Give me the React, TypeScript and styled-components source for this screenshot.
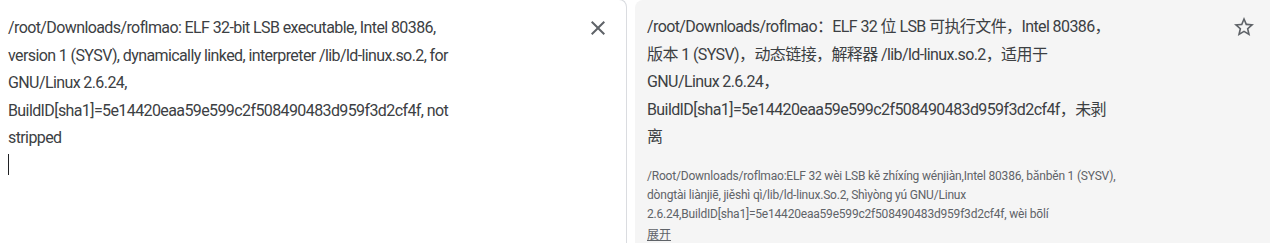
import React from 'react'
import styled, {createGlobalStyle} from 'styled-components'

const GlobalStyle = createGlobalStyle`
  html, body {
    margin: 0;
    padding: 0;
    background: #fff;
    overflow: hidden;
  }
  body {
    font-family: Roboto, "Noto Sans CJK SC", "Liberation Sans", sans-serif;
  }
`

const source = '/root/Downloads/roflmao: ELF 32-bit LSB executable, Intel 80386, version 1 (SYSV), dynamically linked, interpreter /lib/ld-linux.so.2, for GNU/Linux 2.6.24, BuildID[sha1]=5e14420eaa59e599c2f508490483d959f3d2cf4f, not stripped'

const target = '/root/Downloads/roflmao：ELF 32 位 LSB 可执行文件，Intel 80386，版本 1 (SYSV)，动态链接，解释器 /lib/ld-linux.so.2，适用于 GNU/Linux 2.6.24，BuildID[sha1]=5e14420eaa59e599c2f508490483d959f3d2cf4f，未剥离'

const pinyin = '/Root/Downloads/roflmao:ELF 32 wèi LSB kě zhíxíng wénjiàn,Intel 80386, bǎnběn 1 (SYSV), dòngtài liànjiē, jiěshì qì/lib/ld-linux.So.2, Shìyòng yú GNU/Linux 2.6.24,BuildID[sha1]=5e14420eaa59e599c2f508490483d959f3d2cf4f, wèi bōlí'

const CloseIcon = () => (
  <svg width="24" height="24" viewBox="0 0 24 24" fill="#5f6368">
    <path d="M19 6.41 17.59 5 12 10.59 6.41 5 5 6.41 10.59 12 5 17.59 6.41 19 12 13.41 17.59 19 19 17.59 13.41 12z" />
  </svg>
)

const StarIcon = () => (
  <svg width="24" height="24" viewBox="0 0 24 24" fill="#5f6368">
    <path d="M22 9.24l-7.19-.62L12 2 9.19 8.63 2 9.24l5.46 4.73L5.82 21 12 17.27 18.18 21l-1.63-7.03L22 9.24zM12 15.4l-3.76 2.27 1-4.28-3.32-2.88 4.38-.38L12 6.1l1.71 4.04 4.38.38-3.32 2.88 1 4.28L12 15.4z" />
  </svg>
)

export default function App() {
  return (
    <>
      <GlobalStyle />
      <Page>
        <SourcePanel>
          <Editor>
            <MainText $width={462}>{source}</MainText>
            <Caret />
          </Editor>
          <IconButton aria-label="Clear source text">
            <CloseIcon />
          </IconButton>
        </SourcePanel>
        <TargetPanel>
          <Result>
            <MainText $width={468} lang="zh-CN">{target}</MainText>
            <Romanization>{pinyin}</Romanization>
            <Expand>展开</Expand>
          </Result>
          <IconButton aria-label="Save translation">
            <StarIcon />
          </IconButton>
        </TargetPanel>
      </Page>
    </>
  )
}

const Page = styled.div`
  display: flex;
  gap: 8px;
  height: 243px;
  overflow: hidden;
`

const SourcePanel = styled.div`
  display: flex;
  align-items: flex-start;
  width: 627px;
  flex: none;
  border-right: 1px solid #dadce0;
  border-top: 1px solid #dadce0;
  border-top-right-radius: 8px;
  margin-top: -1px;
  padding: 14px 8px 0 8px;
  box-sizing: border-box;
`

const TargetPanel = styled.div`
  display: flex;
  align-items: flex-start;
  flex: 1;
  background: #f5f5f5;
  border-top-left-radius: 8px;
  padding: 13px 6px 0 12px;
`

const Editor = styled.div`
  width: 470px;
  margin-right: auto;
`

const Result = styled.div`
  width: 490px;
  margin-right: auto;
`

const MainText = styled.div<{$width: number}>`
  width: ${p => p.$width}px;
  font-size: 16px;
  line-height: 27.5px;
  letter-spacing: -0.6px;
  color: #3c4043;
`

const Caret = styled.div`
  width: 1px;
  height: 21px;
  margin-top: 2px;
  background: #202124;
`

const Romanization = styled.div`
  margin-top: 16px;
  font-size: 12px;
  line-height: 19px;
  letter-spacing: -0.2px;
  color: #5f6368;
`

const Expand = styled.span`
  display: inline-block;
  font-size: 12px;
  line-height: 20px;
  color: #5f6368;
  text-decoration: underline;
`

const IconButton = styled.button`
  display: flex;
  align-items: center;
  justify-content: center;
  width: 40px;
  height: 40px;
  margin: -6px 0 0;
  padding: 0;
  border: none;
  background: none;
  cursor: pointer;
`
